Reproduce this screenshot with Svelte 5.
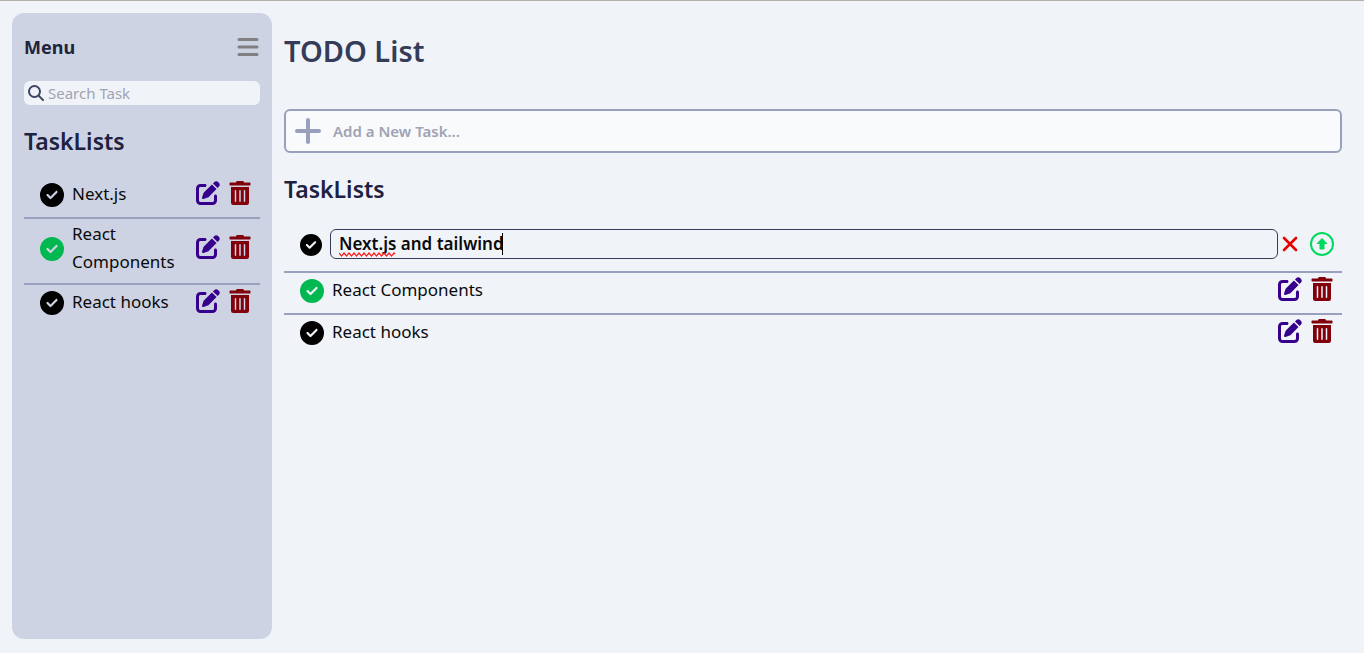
<script lang="ts">
  type Task = { id: number; name: string; done: boolean };

  let tasks: Task[] = $state([
    { id: 1, name: 'Next.js', done: false },
    { id: 2, name: 'React Components', done: true },
    { id: 3, name: 'React hooks', done: false },
  ]);
  let editing: number | null = $state(1);
  let draft = $state('Next.js and tailwind');
  let search = $state('');
  let added = $state('');

  const shown = $derived(tasks.filter((t) => t.name.toLowerCase().includes(search.toLowerCase())));

  function toggle(task: Task) {
    task.done = !task.done;
  }
  function edit(task: Task) {
    editing = task.id;
    draft = task.name;
  }
  function save(task: Task) {
    task.name = draft;
    editing = null;
  }
  function remove(task: Task) {
    tasks = tasks.filter((t) => t.id !== task.id);
  }
  function add(event: SubmitEvent) {
    event.preventDefault();
    if (!added.trim()) return;
    tasks.push({ id: Date.now(), name: added.trim(), done: false });
    added = '';
  }
</script>

{#snippet check(task: Task)}
  <button class="icon check" class:done={task.done} aria-label="Toggle {task.name}" onclick={() => toggle(task)}>
    <svg viewBox="0 0 512 512">
      <path fill="currentColor" fill-rule="evenodd" d="M256 512A256 256 0 1 0 256 0a256 256 0 1 0 0 512zM369 209L241 337c-9.4 9.4-24.6 9.4-33.9 0l-64-64c-9.4-9.4-9.4-24.6 0-33.9s24.6-9.4 33.9 0l47 47L335 175c9.4-9.4 24.6-9.4 33.9 0s9.4 24.6 0 33.9z" />
    </svg>
  </button>
{/snippet}

{#snippet actions(task: Task)}
  <button class="icon edit" aria-label="Edit {task.name}" onclick={() => edit(task)}>
    <svg viewBox="0 0 512 512">
      <path fill="currentColor" d="M471.6 21.7c-21.9-21.9-57.3-21.9-79.2 0L362.3 51.7l97.9 97.9 30.1-30.1c21.9-21.9 21.9-57.3 0-79.2L471.6 21.7zm-299.2 220c-6.1 6.1-10.8 13.6-13.5 21.9l-29.6 88.8c-2.9 8.6-.6 18.1 5.8 24.6s15.9 8.7 24.6 5.8l88.8-29.6c8.2-2.7 15.7-7.4 21.9-13.5L437.7 172.3 339.7 74.3 172.4 241.7zM96 64C43 64 0 107 0 160V416c0 53 43 96 96 96H352c53 0 96-43 96-96V320c0-17.7-14.3-32-32-32s-32 14.3-32 32v96c0 17.7-14.3 32-32 32H96c-17.7 0-32-14.3-32-32V160c0-17.7 14.3-32 32-32h96c17.7 0 32-14.3 32-32s-14.3-32-32-32H96z" />
    </svg>
  </button>
  <button class="icon trash" aria-label="Delete {task.name}" onclick={() => remove(task)}>
    <svg viewBox="0 0 448 512">
      <path fill="currentColor" d="M32 464a48 48 0 0 0 48 48h288a48 48 0 0 0 48-48V128H32zm272-256a16 16 0 0 1 32 0v224a16 16 0 0 1-32 0zm-96 0a16 16 0 0 1 32 0v224a16 16 0 0 1-32 0zm-96 0a16 16 0 0 1 32 0v224a16 16 0 0 1-32 0zM432 32H312l-9.4-18.7A24 24 0 0 0 281.1 0H166.8a23.72 23.72 0 0 0-21.4 13.3L136 32H16A16 16 0 0 0 0 48v32a16 16 0 0 0 16 16h416a16 16 0 0 0 16-16V48a16 16 0 0 0-16-16z" />
    </svg>
  </button>
{/snippet}

<div class="page">
  <aside>
    <header>
      <h3>Menu</h3>
      <button class="icon burger" aria-label="Toggle menu">
        <svg viewBox="0 0 24 24" stroke="currentColor" stroke-width="3" stroke-linecap="round">
          <path d="M3 4.5h18M3 12h18M3 19.5h18" />
        </svg>
      </button>
    </header>
    <label class="search">
      <svg viewBox="0 0 16 16" fill="none" stroke="currentColor" stroke-width="2" stroke-linecap="round">
        <circle cx="6.5" cy="6.5" r="5.5" />
        <path d="M10.6 10.6l4.4 4.4" />
      </svg>
      <input type="search" placeholder="Search Task" aria-label="Search Task" bind:value={search} />
    </label>
    <h2>TaskLists</h2>
    <ul>
      {#each shown as task (task.id)}
        <li>
          {@render check(task)}
          <span class="name">{task.name}</span>
          {@render actions(task)}
        </li>
      {/each}
    </ul>
  </aside>

  <main>
    <h1>TODO List</h1>
    <form onsubmit={add}>
      <button class="icon plus" aria-label="Add task">
        <svg viewBox="0 0 26 26" stroke="currentColor" stroke-width="4" stroke-linecap="round">
          <path d="M13 2v22M2 13h22" />
        </svg>
      </button>
      <input type="text" placeholder="Add a New Task..." aria-label="Add a New Task" bind:value={added} />
    </form>
    <h2>TaskLists</h2>
    <ul>
      {#each tasks as task (task.id)}
        <li class:editing={editing === task.id}>
          {@render check(task)}
          {#if editing === task.id}
            <div class="field">
              <input type="text" aria-label="Task name" bind:value={draft} />
              {#if draft === 'Next.js and tailwind'}
                <svg class="squiggle" viewBox="0 0 58 5" fill="none" stroke="#ff1a1a" stroke-width="1.2">
                  <path d="M0 1l2.500 3l2.500-3l2.500 3l2.500-3l2.500 3l2.500-3l2.500 3l2.500-3l2.500 3l2.500-3l2.500 3l2.500-3l2.500 3l2.500-3l2.500 3l2.500-3l2.500 3l2.500-3l2.500 3l2.500-3l2.500 3l2.500-3l1 1" />
                </svg>
                <span class="caret"></span>
              {/if}
            </div>
            <button class="icon cancel" aria-label="Cancel" onclick={() => (editing = null)}>
              <svg viewBox="0 0 16 16" stroke="currentColor" stroke-width="2.6" stroke-linecap="round">
                <path d="M2 2l12 12M14 2L2 14" />
              </svg>
            </button>
            <button class="icon save" aria-label="Save" onclick={() => save(task)}>
              <svg viewBox="0 0 24 24">
                <circle cx="12" cy="12" r="11" fill="none" stroke="currentColor" stroke-width="2" />
                <path fill="currentColor" stroke="currentColor" stroke-linejoin="round" d="M12 6.5l4.8 5h-2.8v5.5h-4v-5.5H7.200z" />
              </svg>
            </button>
          {:else}
            <span class="name">{task.name}</span>
            {@render actions(task)}
          {/if}
        </li>
      {/each}
    </ul>
  </main>
</div>

<style>
  :global(body) {
    margin: 0;
    background: #f0f4f9;
  }
  .page,
  .page * {
    box-sizing: border-box;
  }
  .page {
    display: flex;
    gap: 12px;
    min-height: 100vh;
    padding: 12px 22px 14px 12px;
    border-top: 1px solid #b4b1a8;
    font-family: 'Noto Sans', sans-serif;
    color: #0a0a0a;
  }
  h1, h2, h3, ul {
    margin: 0;
    padding: 0;
  }
  button, input {
    font: inherit;
    color: inherit;
    padding: 0;
    border: 0;
    background: none;
    outline: none;
  }
  svg {
    display: block;
    width: 100%;
    height: 100%;
  }
  aside {
    flex: 0 0 260px;
    min-width: 0;
    padding: 20px 12px;
    border-radius: 12px;
    background: #cdd3e3;
  }
  header {
    display: flex;
    align-items: center;
    justify-content: space-between;
  }
  h3 {
    font-size: 18px;
    line-height: 28px;
    color: #1e243c;
  }
  h2 {
    font-size: 23px;
    line-height: 32px;
    font-weight: 600;
    color: #1e2140;
  }
  h1 {
    font-size: 29px;
    line-height: 36px;
    font-weight: 600;
    color: #343c58;
  }
  .icon {
    display: grid;
    place-items: center;
    flex: none;
    width: 24px;
    height: 24px;
    cursor: pointer;
  }
  .burger {
    color: #808080;
  }
  .search {
    display: flex;
    align-items: center;
    gap: 4px;
    height: 24px;
    margin: 20px 0;
    padding: 0 4px;
    border-radius: 6px;
    background: #f0f4f9;
    color: #3c4663;
  }
  .search svg {
    flex: none;
    width: 16px;
    height: 16px;
  }
  .search input {
    flex: 1;
    min-width: 0;
    font-size: 15px;
    line-height: 24px;
    appearance: none;
  }
  input::placeholder {
    color: #9fa3b4;
    opacity: 1;
  }
  ul {
    margin-top: 20px;
    list-style: none;
  }
  li {
    display: flex;
    align-items: center;
    min-height: 42px;
    padding: 1px 8px 7px 16px;
    border-bottom: 2px solid #99a0be;
    font-size: 17px;
    line-height: 28px;
  }
  li:last-child {
    min-height: 40px;
    border-bottom: 0;
  }
  .name {
    flex: 1;
    min-width: 0;
    padding: 0 8px;
  }
  .check {
    margin-top: 2px;
    color: #000;
  }
  .check.done {
    color: #00b850;
  }
  .edit,
  .trash {
    margin-bottom: 2px;
  }
  .edit {
    margin-right: 8px;
    color: #37008c;
  }
  .trash {
    color: #82000a;
  }
  main {
    flex: 1;
    min-width: 0;
    padding-top: 20px;
  }
  form {
    display: flex;
    align-items: center;
    gap: 12px;
    height: 44px;
    margin: 40px 0 20px;
    padding: 0 9px;
    border: 2px solid #99a0be;
    border-radius: 6px;
    background: #f9fafc;
  }
  .plus {
    width: 26px;
    height: 26px;
    color: #99a0be;
  }
  form input {
    flex: 1;
    min-width: 0;
    font-size: 15px;
    line-height: 24px;
    font-weight: 600;
  }
  .editing {
    min-height: 48px;
    padding-top: 2px;
    padding-bottom: 11px;
  }
  .editing .check {
    width: 22px;
    height: 22px;
  }
  .field {
    position: relative;
    flex: 1;
    margin-left: 8px;
  }
  .field input {
    display: block;
    width: 100%;
    height: 30px;
    padding: 0 8px;
    border: 1px solid #343c58;
    border-radius: 6px;
    font-weight: 600;
    line-height: 28px;
  }
  .squiggle {
    position: absolute;
    left: 9px;
    top: 23px;
    width: 58px;
    height: 5px;
  }
  .caret {
    position: absolute;
    left: 172px;
    top: 4px;
    width: 1px;
    height: 22px;
    background: #000;
  }
  .field:focus-within .caret {
    display: none;
  }
  .cancel {
    margin-right: 8px;
    color: #e60000;
  }
  .cancel svg {
    width: 16px;
    height: 16px;
  }
  .save {
    color: #00d95f;
  }
</style>
